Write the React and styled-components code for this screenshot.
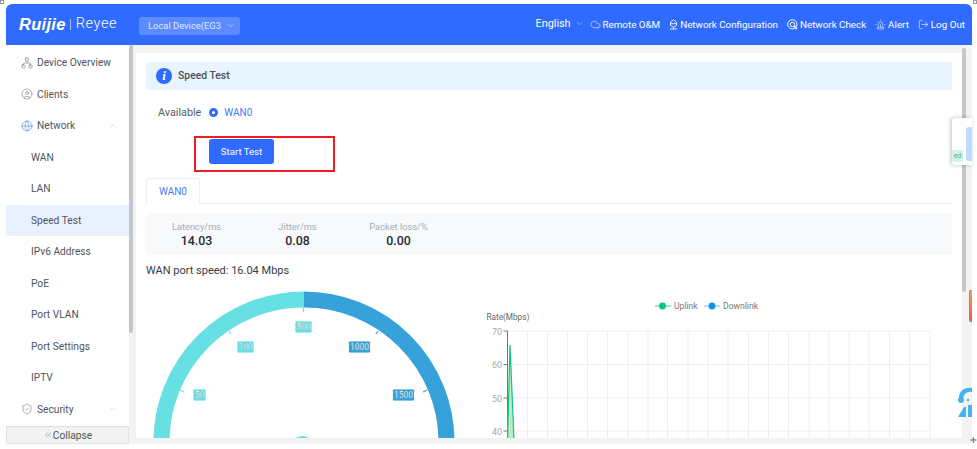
import React from 'react';
import styled, { createGlobalStyle } from 'styled-components';
import { Network, CircleUser, Globe, ChevronUp, ChevronDown, ShieldCheck, Cloud, Siren, LogOut, ChevronsLeft } from 'lucide-react';

const GlobalStyle = createGlobalStyle`
  html, body { margin: 0; padding: 0; background: #fff; }
  body { font-family: Roboto, "Noto Sans", sans-serif; color: #4a4f57; }
  #root { width: 977px; height: 449px; overflow: hidden; position: relative; }
  * { box-sizing: border-box; }
`;

const Shell = styled.div`
  width: 966px;
  height: 440px;
  margin: 4px 0 0 6px;
  display: flex;
  flex-direction: column;
`;

const Header = styled.header`
  height: 41px;
  flex: none;
  background: #2f6bff;
  border-radius: 6px 6px 0 0;
  display: flex;
  align-items: center;
  color: #fff;
  padding: 0 7px 0 13px;
`;

const Logo = styled.div`
  display: flex;
  align-items: center;
  width: 120px;
  line-height: 1;
`;

const LogoMain = styled.span`
  font-family: "Liberation Sans", sans-serif;
  font-weight: 700;
  font-style: italic;
  font-size: 16.5px;
  letter-spacing: 0.3px;
`;

const LogoDivider = styled.span`
  width: 1px;
  height: 11px;
  background: rgba(255,255,255,.55);
  margin: 0 5px 0 4px;
`;

const LogoSub = styled.span`
  font-size: 14.5px;
  font-weight: 300;
  letter-spacing: 0.6px;
`;

const DevicePill = styled.div`
  width: 101px;
  height: 18px;
  margin-top: 2px;
  border-radius: 3px;
  background: rgba(255,255,255,.22);
  color: rgba(255,255,255,.85);
  font-size: 9.4px;
  display: flex;
  align-items: center;
  padding-left: 9px;
  gap: 5px;
  white-space: nowrap;
`;

const HeaderNav = styled.nav`
  margin-left: auto;
  display: flex;
  align-items: center;
  gap: 9px;
  font-size: 9.8px;
  white-space: nowrap;
`;

const Lang = styled.span`
  font-size: 10.8px;
  display: flex;
  align-items: center;
  gap: 4px;
  margin-right: -3px;
  margin-top: -3px;
`;

const NavItem = styled.span`
  display: flex;
  align-items: center;
  gap: 2px;
`;

const Body = styled.div`
  flex: 1;
  min-height: 0;
  display: flex;
  background: #f3f3f3;
`;

const Side = styled.aside`
  width: 123px;
  flex: none;
  display: flex;
  flex-direction: column;
  background: #fff;
`;

const Menu = styled.ul`
  list-style: none;
  margin: 2px 0 0;
  padding: 0;
  flex: 1;
  overflow: hidden;
`;

const MenuRow = styled.li`
  height: 31.5px;
  display: flex;
  align-items: center;
  gap: 4px;
  padding: 0 11px 0 ${p => (p.$child ? 25 : 15)}px;
  font-size: 10.2px;
  white-space: nowrap;
  color: #4f545c;
  background: ${p => (p.$active ? '#e9f0ff' : 'transparent')};
  svg:last-child:not(:first-child) { margin-left: auto; }
`;

const Collapse = styled.div`
  height: 18px;
  flex: none;
  background: #f3f3f3;
  border: 1px solid #e2e2e2;
  border-top: 1px solid #ddd;
  border-radius: 0 0 2px 2px;
  display: flex;
  align-items: center;
  justify-content: center;
  font-size: 10.2px;
  color: #4f545c;
`;

const Thumb = styled.div`
  width: 4px;
  flex: none;
  height: ${p => p.$h}px;
  margin-top: ${p => p.$top || 0}px;
  margin-right: ${p => p.$right || 0}px;
  background: #c3c6cb;
  border-radius: 2px;
`;

const Card = styled.main`
  width: 826px;
  height: 385px;
  flex: none;
  margin-top: 8px;
  background: #fff;
  border-radius: 3px 0 0 3px;
  padding: 9px 10px 0;
  overflow: hidden;
`;

const Banner = styled.div`
  height: 28px;
  background: #e8f4ff;
  border-radius: 3px;
  display: flex;
  align-items: center;
  padding-left: 10px;
  gap: 6px;
  font-size: 10.4px;
  font-weight: 500;
  color: #4a4f57;
`;

const BannerText = styled.span`
  margin-top: -2px;
`;

const InfoDot = styled.span`
  width: 16px;
  height: 16px;
  border-radius: 50%;
  background: #2f6bff;
  color: #fff;
  font-family: "Liberation Serif", serif;
  font-style: italic;
  font-weight: 700;
  font-size: 13px;
  display: flex;
  align-items: center;
  justify-content: center;
`;

const Available = styled.div`
  display: flex;
  align-items: center;
  margin: 13px 0 0 12px;
  height: 18px;
  font-size: 10.8px;
  color: #555a62;
`;

const Radio = styled.span`
  width: 9px;
  height: 9px;
  border-radius: 50%;
  border: 3px solid #2f6bff;
  background: #fff;
  margin: 0 6px 0 8px;
`;

const BlueText = styled.span`
  color: #4a78f5;
  font-size: 10px;
`;

const RedBox = styled.div`
  width: 141px;
  height: 36px;
  margin: 15px 0 0 48px;
  border: 2px solid #ee1c25;
  padding: 1px 0 0 13px;
`;

const StartButton = styled.button`
  width: 65px;
  height: 25px;
  border: 0;
  border-radius: 3px;
  background: #2f6bff;
  color: #fff;
  font: inherit;
  font-size: 9.6px;
  padding: 0;
`;

const TabBar = styled.div`
  margin-top: 6px;
  height: 26px;
  border-bottom: 1px solid #eeeeee;
`;

const Tab = styled.div`
  width: 54px;
  height: 26px;
  border: 1px solid #eeeeee;
  border-bottom-color: #fff;
  border-radius: 3px 3px 0 0;
  display: flex;
  align-items: center;
  justify-content: center;
`;

const Stats = styled.div`
  margin-top: 9px;
  height: 42px;
  background: #f8f9fb;
  display: flex;
  padding-left: 0;
`;

const Stat = styled.div`
  width: 101px;
  text-align: center;
  padding-top: 7px;
  font-size: 9.3px;
  line-height: 13px;
  color: #a6adb9;
  b {
    display: block;
    font-size: 12.4px;
    line-height: 15px;
    font-weight: 500;
    color: #262a30;
  }
`;

const Speed = styled.div`
  margin-top: 8px;
  font-size: 11px;
  line-height: 15px;
  color: #383c42;
`;

const Charts = styled.div`
  display: flex;
  margin-top: 6px;
`;

const ChartSvg = styled.svg`
  display: block;
  flex: none;
  font-family: Roboto, sans-serif;
`;

// floating things on the right edge of the page
const Floater = styled.div`
  position: absolute;
  left: 952px;
  top: 118px;
  width: 20px;
  height: 47px;
  background: #fff;
  border-radius: 3px 0 0 3px;
  box-shadow: -1px 0 4px rgba(0,0,0,.25);
`;

const FloaterBlue = styled.div`
  position: absolute;
  left: 14px;
  top: 9px;
  width: 6px;
  height: 34px;
  background: #bedcff;
  border-radius: 3px 0 0 3px;
`;

const FloaterTag = styled.div`
  position: absolute;
  left: 0;
  top: 32px;
  width: 11px;
  height: 12px;
  background: #d4f3e4;
  color: #3fb58a;
  font-size: 7px;
  line-height: 12px;
  text-align: center;
`;

const MiniBar = styled.div`
  position: absolute;
  left: 969px;
  top: 290px;
  width: 3px;
  height: 32px;
  border: 1px solid #8d8d8d;
  border-right: 0;
  border-radius: 2px 0 0 2px;
  background: linear-gradient(#f2a35c, #ee5a4a);
`;

const Headset = styled.svg`
  position: absolute;
  left: 958px;
  top: 386px;
`;

const CornerMark = styled.span`
  position: absolute;
  left: ${p => p.$x}px;
  top: ${p => p.$y}px;
  width: 4px;
  height: 4px;
  border: 1px solid #9a9a9a;
  background: #fff;
`;

const PlusMark = styled.span`
  position: absolute;
  left: 970px;
  top: 436px;
  font-size: 8px;
  line-height: 10px;
  color: #555;
`;

const menu = [
  { label: 'Device Overview', icon: Network },
  { label: 'Clients', icon: CircleUser },
  { label: 'Network', icon: Globe, blue: true, arrow: ChevronUp },
  { label: 'WAN', child: true },
  { label: 'LAN', child: true },
  { label: 'Speed Test', child: true, active: true },
  { label: 'IPv6 Address', child: true },
  { label: 'PoE', child: true },
  { label: 'Port VLAN', child: true },
  { label: 'Port Settings', child: true },
  { label: 'IPTV', child: true },
  { label: 'Security', icon: ShieldCheck, arrow: ChevronDown },
];

const gaugeLabels = [
  { t: '500', x: 303.5, y: 327, w: 17, c: '#66e0e3' },
  { t: '100', x: 245.5, y: 347, w: 17, c: '#66e0e3' },
  { t: '50', x: 199.5, y: 395, w: 13, c: '#66e0e3' },
  { t: '1000', x: 359.5, y: 347, w: 22, c: '#37a2da' },
  { t: '1500', x: 403.5, y: 395, w: 22, c: '#37a2da' },
];

const gaugeTicks = [
  { d: 'M303.5 307.5V312', c: '#66e0e3' },
  { d: 'M229 331L231 334', c: '#66e0e3' },
  { d: 'M180 390L184 392', c: '#66e0e3' },
  { d: 'M378 331L376 334', c: '#37a2da' },
  { d: 'M427 390L423 392', c: '#37a2da' },
];

const Gauge = () => (
  <ChartSvg width="330" height="170" viewBox="146 284 330 170">
    <path d="M161.5 442A142.5 142.5 0 0 1 304 299.5" fill="none" stroke="#66e0e3" strokeWidth="16" />
    <path d="M304 299.5A142.5 142.5 0 0 1 446.5 442" fill="none" stroke="#37a2da" strokeWidth="16" />
    {gaugeTicks.map(k => <path key={k.d} d={k.d} stroke={k.c} strokeWidth="1.2" />)}
    {gaugeLabels.map(l => (
      <g key={l.t}>
        <rect x={l.x - l.w / 2} y={l.y - 6} width={l.w} height="12" rx="1.5" fill={l.c} stroke="#fff" strokeWidth=".8" />
        <text x={l.x} y={l.y + 3} textAnchor="middle" fontSize="8.4" fill="#fff" stroke="#667" strokeWidth=".15">{l.t}</text>
      </g>
    ))}
    <path d="M288 440Q300 436 303 436T312 440Z" fill="#66e0e3" />
  </ChartSvg>
);

const gridXs = [527.5, 547.5, 567.5, 587.5, 607.5, 628, 648, 667.5, 688, 708, 728, 748.5, 768.5, 788.5, 809, 829, 849, 869, 889.5, 909.5, 930];
const gridYs = [{ y: 331, t: '70' }, { y: 364.5, t: '60' }, { y: 398, t: '50' }, { y: 431, t: '40' }];

const RateChart = () => (
  <ChartSvg width="476" height="170" viewBox="476 284 476 170">
    <g stroke="#eeeeee" strokeWidth="1">
      {gridXs.map(x => <path key={x} d={`M${x} 331V450`} />)}
      {gridYs.map(r => <path key={r.y} d={`M507 ${r.y}H930`} />)}
    </g>
    <path d="M507.5 331V450" stroke="#777" strokeWidth="1" />
    {gridYs.map(r => (
      <g key={r.t}>
        <path d={`M503.5 ${r.y}H507.5`} stroke="#777" strokeWidth="1" />
        <text x="502" y={r.y + 3.5} textAnchor="end" fontSize="9" fill="#a9a9a9">{r.t}</text>
      </g>
    ))}
    <text x="486.5" y="320" fontSize="8.2" fill="#666">Rate(Mbps)</text>
    <path d="M507.5 440L510 345L514 440Z" fill="#bfe8c8" />
    <path d="M507.5 440L510 345L514 440" fill="none" stroke="#12c47f" strokeWidth="1.2" />
    <path d="M655 306H671" stroke="#00c781" strokeWidth=".8" />
    <circle cx="662.5" cy="306" r="3.4" fill="#00c781" />
    <text x="674" y="309" fontSize="8.6" fill="#777">Uplink</text>
    <path d="M704 306H720" stroke="#43b4f0" strokeWidth=".8" />
    <circle cx="712" cy="306" r="3.4" fill="#0a94e0" />
    <text x="723" y="309" fontSize="8.6" fill="#777">Downlink</text>
  </ChartSvg>
);

const ConfigIcon = () => (
  <svg width="9" height="11" viewBox="0 0 9 11" fill="none" stroke="#fff" strokeWidth=".9">
    <path d="M4.5 .8L7.5 3.2V6.4L4.5 8.2L1.5 6.4V3.2Z" />
    <path d="M1.5 4.7H7.5M1 10H8M4.5 8.2V10" />
  </svg>
);

const CheckIcon = () => (
  <svg width="11" height="11" viewBox="0 0 11 11" fill="none" stroke="#fff" strokeWidth="1">
    <circle cx="5.3" cy="5.3" r="4.6" />
    <circle cx="5.5" cy="5.5" r="2.2" />
    <path d="M7.2 7.2L10 10" strokeWidth="1.5" />
  </svg>
);

export default function App() {
  return (
    <>
      <GlobalStyle />
      <Shell>
        <Header>
          <Logo>
            <LogoMain>Ruijie</LogoMain>
            <LogoDivider />
            <LogoSub>Reyee</LogoSub>
          </Logo>
          <DevicePill>
            Local Device(EG3
            <ChevronDown size={9} strokeWidth={1.2} />
          </DevicePill>
          <HeaderNav>
            <Lang>English <ChevronDown size={9} strokeWidth={1.2} /></Lang>
            <NavItem><Cloud size={11} strokeWidth={1.2} />Remote O&amp;M</NavItem>
            <NavItem><ConfigIcon />Network Configuration</NavItem>
            <NavItem><CheckIcon />Network Check</NavItem>
            <NavItem><Siren size={11} strokeWidth={1.2} />Alert</NavItem>
            <NavItem><LogOut size={11} strokeWidth={1.3} />Log Out</NavItem>
          </HeaderNav>
        </Header>
        <Body>
          <Side>
            <Menu>
              {menu.map(m => {
                const Icon = m.icon;
                const Arrow = m.arrow;
                return (
                  <MenuRow key={m.label} $child={m.child} $active={m.active}>
                    {Icon && <Icon size={12} strokeWidth={1.1} color={m.blue ? '#3a78e8' : '#6b7078'} />}
                    <span>{m.label}</span>
                    {Arrow && <Arrow size={10} strokeWidth={1} color="#a8acb2" />}
                  </MenuRow>
                );
              })}
            </Menu>
            <Collapse><ChevronsLeft size={10} strokeWidth={1} />Collapse</Collapse>
          </Side>
          <Thumb $h={288} $right={3} />
          <Card>
            <Banner><InfoDot>i</InfoDot><BannerText>Speed Test</BannerText></Banner>
            <Available>Available<Radio /><BlueText>WAN0</BlueText></Available>
            <RedBox><StartButton>Start Test</StartButton></RedBox>
            <TabBar><Tab><BlueText>WAN0</BlueText></Tab></TabBar>
            <Stats>
              <Stat>Latency/ms<b>14.03</b></Stat>
              <Stat>Jitter/ms<b>0.08</b></Stat>
              <Stat>Packet loss/%<b>0.00</b></Stat>
            </Stats>
            <Speed>WAN port speed: 16.04 Mbps</Speed>
            <Charts>
              <Gauge />
              <RateChart />
            </Charts>
          </Card>
          <Thumb $h={244} $top={3} />
        </Body>
      </Shell>
      <Floater>
        <FloaterBlue />
        <FloaterTag>ed</FloaterTag>
      </Floater>
      <MiniBar />
      <Headset width="14" height="32" viewBox="0 0 14 32">
        <path d="M1 15C0 6 5 1 14 2V6C8 5 5 9 5 15Z" fill="#45b4ee" />
        <circle cx="3" cy="14" r="3" fill="#45b4ee" />
        <path d="M0 31L6 21H8V31Z" fill="#45b4ee" />
        <rect x="10" y="19" width="4" height="12" fill="#45b4ee" />
        <circle cx="10" cy="14" r="1.2" fill="#45b4ee" />
      </Headset>
      <CornerMark $x={0} $y={0} />
      <CornerMark $x={973} $y={0} />
      <PlusMark>✛</PlusMark>
    </>
  );
}
